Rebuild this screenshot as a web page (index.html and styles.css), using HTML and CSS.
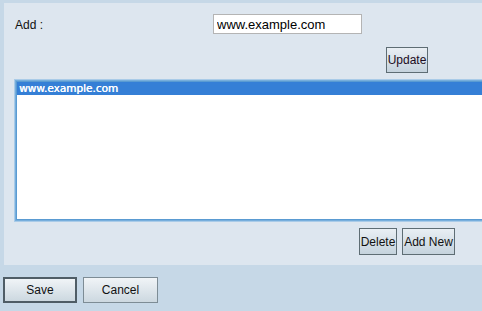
FILE: index.html
```html
<!DOCTYPE html>
<html>
<head>
<meta charset="utf-8">
<link rel="stylesheet" href="styles.css">
</head>
<body>
<div class="page">
  <div class="panel">
    <div class="row-add">
      <span class="label">Add :</span>
      <input class="text-input" type="text" value="www.example.com">
    </div>
    <div class="row-update">
      <button class="btn btn-update">Update</button>
    </div>
    <div class="listbox">
      <div class="option selected">www.example.com</div>
    </div>
    <div class="row-actions">
      <button class="btn btn-delete">Delete</button>
      <button class="btn btn-addnew">Add New</button>
    </div>
  </div>
  <div class="footer">
    <button class="btn btn-foot btn-save">Save</button>
    <button class="btn btn-foot btn-cancel">Cancel</button>
  </div>
</div>
</body>
</html>
```
FILE: styles.css
```css
html, body {
  margin: 0;
  padding: 0;
  background: #c6d8e7;
  overflow: hidden;
  width: 482px;
  height: 311px;
  font-family: "Liberation Sans", Arial, sans-serif;
  font-size: 12px;
  color: #111;
}
.page {
  padding-top: 3px;
}
.panel {
  margin-left: 4px;
  width: 478px;
  height: 262px;
  box-sizing: border-box;
  background: #dde6ef;
  padding: 11px 0 0 11px;
}
.row-add {
  display: flex;
  align-items: center;
  height: 20px;
}
.label {
  width: 198px;
  font-size: 12px;
  color: #111;
  position: relative;
  top: 1px;
}
.text-input {
  box-sizing: border-box;
  width: 149px;
  height: 20px;
  margin: 0;
  border: 1px solid #b4b4b4;
  background: #fff;
  padding: 0 0 0 3px;
  font-family: "Liberation Sans", Arial, sans-serif;
  font-size: 13px;
  color: #000;
  outline: none;
}
.row-update {
  display: flex;
  margin-top: 13px;
  padding-left: 371px;
}
.btn {
  box-sizing: border-box;
  margin: 0;
  padding: 0;
  font-family: "Liberation Sans", Arial, sans-serif;
  font-size: 12px;
  color: #111;
  border: 1px solid #5e6d74;
  background: linear-gradient(#e9eff4, #c5d3dd);
  border-radius: 0;
  cursor: default;
}
.btn-update {
  width: 42px;
  height: 26px;
  color: #1c0c22;
}
.listbox {
  margin-top: 8px;
  margin-left: 1px;
  width: 466px;
  height: 139px;
  box-sizing: border-box;
  background: #fff;
  border: 1px solid #5a9bd2;
  border-right: 0;
  box-shadow: 0 0 0 1px #76aedc, 0 0 0 2px #a9cbe8;
}
.option {
  height: 13px;
  line-height: 13px;
  padding-left: 2px;
  font-family: "DejaVu Sans", sans-serif;
  font-size: 10.5px;
  font-weight: normal;
}
.option.selected {
  background: #357fd6;
  color: #fff;
  text-shadow: 0.4px 0 0 #fff;
}
.row-actions {
  display: flex;
  gap: 5px;
  margin-top: 8px;
  padding-left: 344px;
}
.btn-delete {
  width: 38px;
  height: 27px;
}
.btn-addnew {
  width: 53px;
  height: 27px;
}
.footer {
  display: flex;
  gap: 6px;
  margin-top: 12px;
  padding-left: 3px;
}
.btn-foot {
  height: 26px;
  font-size: 12px;
  background: linear-gradient(#f0f4f7, #ccd8e0);
}
.btn-save {
  width: 74px;
  border: 2px solid #4f5d66;
}
.btn-cancel {
  width: 75px;
  border: 1px solid #7d8c95;
}
```
